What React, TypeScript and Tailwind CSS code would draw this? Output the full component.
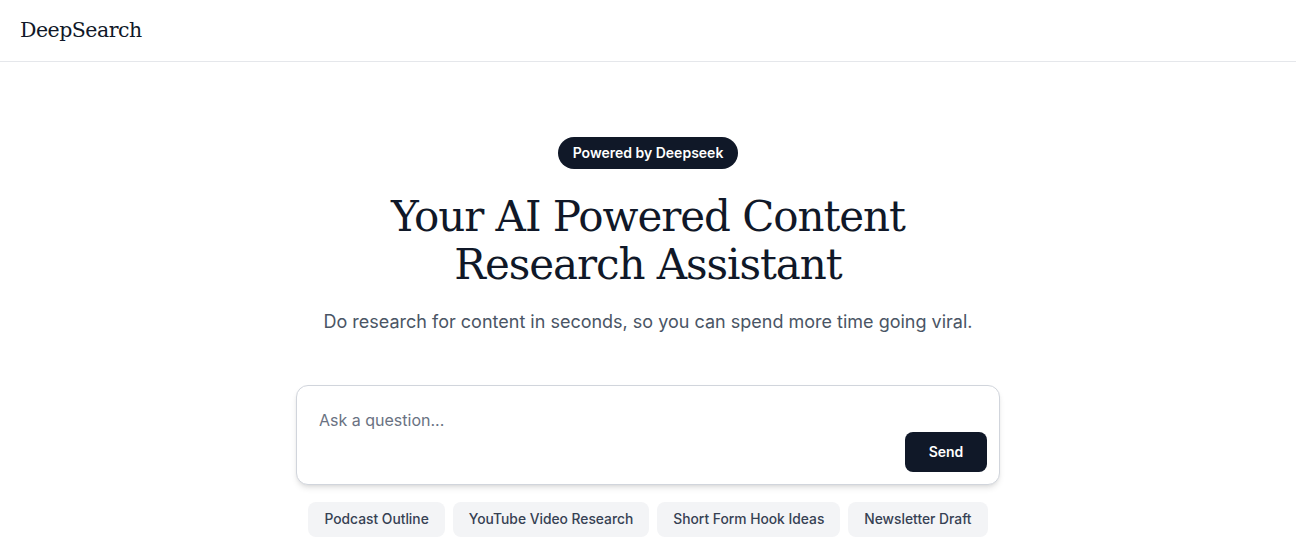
import React, { useState } from "react";

const suggestions = [
  "Podcast Outline",
  "YouTube Video Research",
  "Short Form Hook Ideas",
  "Newsletter Draft",
];

export default function App() {
  const [query, setQuery] = useState("");

  return (
    <div className="min-h-screen bg-white font-['Inter',sans-serif] text-gray-900">
      {/* header */}
      <header className="h-[62px] border-b border-gray-200 px-5 flex items-center">
        <span className="font-['DejaVu_Serif',serif] text-[20.5px] tracking-tight text-gray-900">
          DeepSearch
        </span>
      </header>

      {/* hero */}
      <main className="flex flex-col items-center pt-[75px] px-4">
        <span className="rounded-full bg-gray-900 px-[15px] h-8 flex items-center text-sm font-semibold text-white">
          Powered by Deepseek
        </span>
        <h1 className="mt-6 text-center font-['DejaVu_Serif',serif] text-[42px] leading-[48px] tracking-tight text-gray-900">
          Your AI Powered Content
          <br />
          Research Assistant
        </h1>
        <p className="mt-[19px] text-lg text-gray-600">
          Do research for content in seconds, so you can spend more time going viral.
        </p>

        <div className="mt-[49px] w-[704px] h-[100px] rounded-xl border border-gray-300 bg-white shadow-md flex flex-col px-[22px] pt-[22px] pb-3">
          <input
            value={query}
            onChange={(e) => setQuery(e.target.value)}
            placeholder="Ask a question..."
            className="w-full bg-transparent text-base text-gray-900 placeholder:text-gray-500 outline-none"
          />
          <div className="mt-auto flex justify-end -mr-2.5">
            <button className="h-10 w-[82px] rounded-lg bg-gray-900 text-sm font-semibold text-white">
              Send
            </button>
          </div>
        </div>

        <div className="mt-[17px] flex gap-2">
          {suggestions.map((s) => (
            <button
              key={s}
              onClick={() => setQuery(s)}
              className="h-[35px] rounded-lg bg-gray-100 px-4 text-[13.8px] font-medium text-gray-700"
            >
              {s}
            </button>
          ))}
        </div>
      </main>
    </div>
  );
}
